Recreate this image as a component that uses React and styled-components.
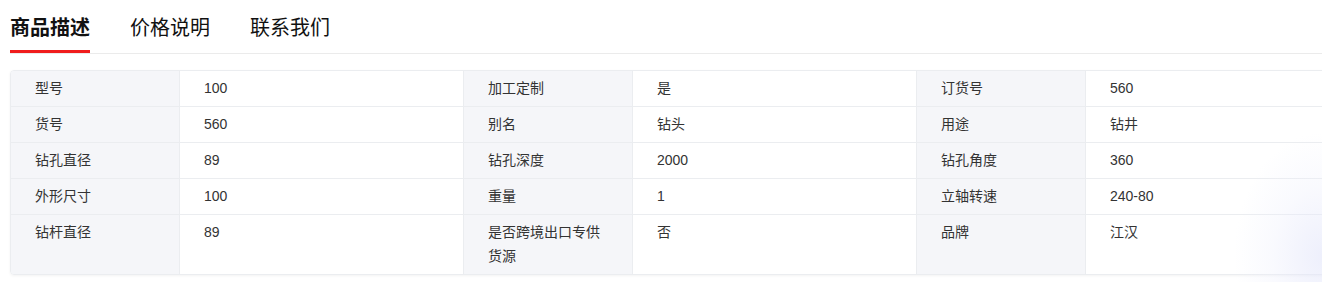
import React from "react";
import styled, { createGlobalStyle } from "styled-components";

const GlobalStyle = createGlobalStyle`
  html, body {
    margin: 0;
    padding: 0;
    background: #ffffff;
    overflow: hidden;
  }
  body {
    font-family: "Liberation Sans", "Noto Sans CJK SC", sans-serif;
    color: #333333;
  }
`;

const tabs = ["商品描述", "价格说明", "联系我们"];

const rows = [
  [["型号", "100"], ["加工定制", "是"], ["订货号", "560"]],
  [["货号", "560"], ["别名", "钻头"], ["用途", "钻井"]],
  [["钻孔直径", "89"], ["钻孔深度", "2000"], ["钻孔角度", "360"]],
  [["外形尺寸", "100"], ["重量", "1"], ["立轴转速", "240-80"]],
  [["钻杆直径", "89"], ["是否跨境出口专供货源", "否"], ["品牌", "江汉"]],
];

export default function App() {
  return (
    <>
      <GlobalStyle />
      <Page>
        <TabBar>
          {tabs.map((t, i) => (
            <Tab key={t} $active={i === 0}>
              {t}
            </Tab>
          ))}
        </TabBar>
        <Table>
          {rows.map((row, i) => (
            <Row key={i} $last={i === rows.length - 1}>
              {row.map(([label, value]) => (
                <React.Fragment key={label}>
                  <Label>{label}</Label>
                  <Value>{value}</Value>
                </React.Fragment>
              ))}
            </Row>
          ))}
        </Table>
        <EdgeShade />
      </Page>
    </>
  );
}

const Page = styled.div`
  position: relative;
  width: 1322px;
  height: 282px;
  overflow: hidden;
  padding: 0 0 0 10px;
  box-sizing: border-box;
`;

const TabBar = styled.div`
  display: flex;
  gap: 40px;
  height: 53px;
  border-bottom: 1px solid #ebebeb;
`;

const Tab = styled.div`
  position: relative;
  display: flex;
  align-items: center;
  width: 80px;
  height: 53px;
  box-sizing: border-box;
  font-family: "Noto Sans CJK SC", sans-serif;
  font-size: 20px;
  font-weight: ${(p) => (p.$active ? 700 : 400)};
  color: #111111;
  white-space: nowrap;
  &::after {
    content: "";
    display: ${(p) => (p.$active ? "block" : "none")};
    position: absolute;
    left: 0;
    right: 0;
    bottom: 0;
    height: 3px;
    background: #f01c1c;
  }
`;

const Table = styled.div`
  margin-top: 16px;
  width: 1360px;
  border: 1px solid #ebedf0;
  border-radius: 4px;
  box-shadow: 0 1px 3px rgba(0, 0, 0, 0.05);
  overflow: hidden;
  font-size: 14px;
`;

const Row = styled.div`
  display: grid;
  grid-template-columns: 169px 283px 170px 283px 170px 283px;
  border-bottom: ${(p) => (p.$last ? "none" : "1px solid #ebedf0")};
`;

const Cell = styled.div`
  padding: 5px 24px 6px;
  line-height: 24px;
  font-family: "Liberation Sans", "Noto Sans CJK SC", sans-serif;
  color: #333333;
`;

const Label = styled(Cell)`
  background: #f5f6f9;
  border-right: 1px solid #ebedf0;
  &:not(:first-child) {
    border-left: 1px solid #ebedf0;
  }
`;

const Value = styled(Cell)`
  background: #ffffff;
`;

const EdgeShade = styled.div`
  position: absolute;
  right: 0;
  top: 110px;
  width: 110px;
  height: 172px;
  pointer-events: none;
  background: radial-gradient(
    ellipse 100% 90% at 100% 85%,
    rgba(226, 229, 250, 0.6) 0%,
    rgba(236, 238, 252, 0.3) 45%,
    rgba(255, 255, 255, 0) 80%
  );
`;
